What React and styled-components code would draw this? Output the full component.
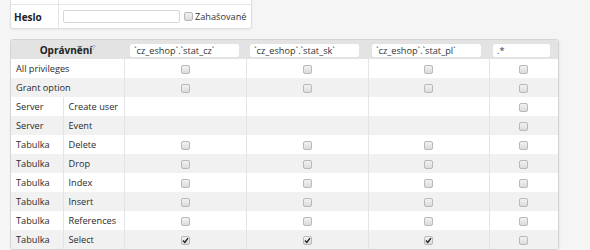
import React from 'react'
import styled, { createGlobalStyle } from 'styled-components'

const GlobalStyle = createGlobalStyle`
    html, body {
        margin: 0;
        padding: 0;
        background: #f5f5f5;
        font-family: "Open Sans", "Noto Sans", sans-serif;
        font-size: 9.2px;
        color: #333;
        overflow: hidden;
    }
`

const Page = styled.div`
    padding: 0 10px;
    display: flex;
    flex-direction: column;
    align-items: flex-start;
    gap: 10px;
`

const FormBox = styled.div`
    margin-top: -20px;
    width: 240px;
    background: #fff;
    border: 1px solid #dedede;
    border-radius: 0 0 3px 3px;
    box-shadow: 0 1px 2px rgba(0, 0, 0, 0.06);
`

const FormRow = styled.div`
    display: flex;
    align-items: stretch;
    height: 23px;
    & + & {
        border-top: 1px solid #e6e6e6;
    }
`

const FormLabel = styled.div`
    width: 44px;
    padding-left: 3px;
    display: flex;
    align-items: center;
    font-weight: bold;
    font-size: 10px;
    color: ${p => (p.$faint ? '#aaa' : '#222')};
    border-right: 1px solid #e6e6e6;
`

const FormField = styled.div`
    flex: 1;
    display: flex;
    align-items: center;
    gap: 4px;
    padding-left: 4px;
`

const TextInput = styled.input`
    box-sizing: border-box;
    width: ${p => p.$w || 117}px;
    height: 13px;
    padding: 0 3px;
    border: 1px solid ${p => (p.$bare ? '#fff' : '#d6d6d6')};
    border-radius: 2px;
    background: #fff;
    font-family: inherit;
    font-size: 9.2px;
    color: ${p => (p.$faint ? '#bbb' : '#333')};
    outline: none;
`

const CheckLabel = styled.label`
    display: flex;
    align-items: center;
    gap: 2px;
    font-size: 9.2px;
    color: #333;
    white-space: nowrap;
`

const Box = styled.span`
    display: inline-flex;
    align-items: center;
    justify-content: center;
    box-sizing: border-box;
    width: 9px;
    height: 9px;
    border: 1px solid #b9b9b9;
    border-radius: 2px;
    background: linear-gradient(#f2f2f2, #dcdcdc);
    vertical-align: middle;
`

const TableFrame = styled.div`
    border: 1px solid #d4d4d4;
    border-radius: 3px;
    overflow: hidden;
    background: #fff;
    box-shadow: 1px 1px 2px rgba(0, 0, 0, 0.05);
`

const Table = styled.table`
    border-collapse: collapse;
    table-layout: fixed;
`

const HeadCell = styled.th`
    height: 19px;
    padding: 0 0 0 ${p => p.$pl || 0}px;
    background: #e3e3e3;
    font-weight: bold;
    font-size: 10px;
    color: #222;
    text-align: ${p => p.$align || 'left'};
    vertical-align: middle;
`

const Help = styled.sup`
    color: #7fa0cf;
    font-size: 7px;
    font-weight: normal;
    vertical-align: 4px;
    line-height: 0;
`

const Row = styled.tr`
    background: ${p => (p.$odd ? '#f1f1f1' : '#fff')};
    & + & td {
        border-top: 1px solid #e4e4e4;
    }
`

const Cell = styled.td`
    height: 19px;
    padding: 0 5px;
    white-space: nowrap;
    text-align: ${p => (p.$center ? 'center' : 'left')};
    vertical-align: middle;
    line-height: 1;
    color: #2b2b2b;
    & + & {
        border-left: 1px solid #e4e4e4;
    }
`

const Check = ({ checked }) => (
    <Box>
        {checked && (
            <svg width="7" height="7" viewBox="0 0 7 7">
                <path d="M1 3.6 L2.8 5.4 L6 1.2" fill="none" stroke="#222" strokeWidth="1.4" />
            </svg>
        )}
    </Box>
)

const columns = ['`cz_eshop`.`stat_cz`', '`cz_eshop`.`stat_sk`', '`cz_eshop`.`stat_pl`', '.*']
const widths = [52, 61, 122, 122, 121, 69]

const all = [false, false, false, false]
const rows = [
    { name: 'All privileges', cells: all },
    { name: 'Grant option', cells: all },
    { type: 'Server', name: 'Create user', cells: [null, null, null, false] },
    { type: 'Server', name: 'Event', cells: [null, null, null, false] },
    { type: 'Tabulka', name: 'Delete', cells: all },
    { type: 'Tabulka', name: 'Drop', cells: all },
    { type: 'Tabulka', name: 'Index', cells: all },
    { type: 'Tabulka', name: 'Insert', cells: all },
    { type: 'Tabulka', name: 'References', cells: all },
    { type: 'Tabulka', name: 'Select', cells: [true, true, true, false] },
]

export default function App() {
    return (
        <Page>
            <GlobalStyle />
            <FormBox>
                <FormRow>
                    <FormLabel $faint>Uživatel</FormLabel>
                    <FormField>
                        <TextInput $faint defaultValue="eshop_stat" />
                    </FormField>
                </FormRow>
                <FormRow>
                    <FormLabel>Heslo</FormLabel>
                    <FormField>
                        <TextInput />
                        <CheckLabel>
                            <Check />
                            Zahašované
                        </CheckLabel>
                    </FormField>
                </FormRow>
            </FormBox>

            <TableFrame>
                <Table>
                    <colgroup>
                        {widths.map((w, i) => <col key={i} style={{ width: w }} />)}
                    </colgroup>
                    <thead>
                        <tr>
                            <HeadCell colSpan={2} $align="center">
                                Oprávnění<Help>?</Help>
                            </HeadCell>
                            {columns.map((c, i) => (
                                <HeadCell key={c} $pl={i === 0 ? 6 : 4}>
                                    <TextInput $bare $w={i === 3 ? 57 : 109} defaultValue={c} />
                                </HeadCell>
                            ))}
                        </tr>
                    </thead>
                    <tbody>
                        {rows.map((r, i) => (
                            <Row key={r.name} $odd={i % 2 === 1}>
                                {r.type ? (
                                    <>
                                        <Cell>{r.type}</Cell>
                                        <Cell>{r.name}</Cell>
                                    </>
                                ) : (
                                    <Cell colSpan={2}>{r.name}</Cell>
                                )}
                                {r.cells.map((c, j) => (
                                    <Cell key={j} $center>
                                        {c !== null && <Check checked={c} />}
                                    </Cell>
                                ))}
                            </Row>
                        ))}
                    </tbody>
                </Table>
            </TableFrame>
        </Page>
    )
}
